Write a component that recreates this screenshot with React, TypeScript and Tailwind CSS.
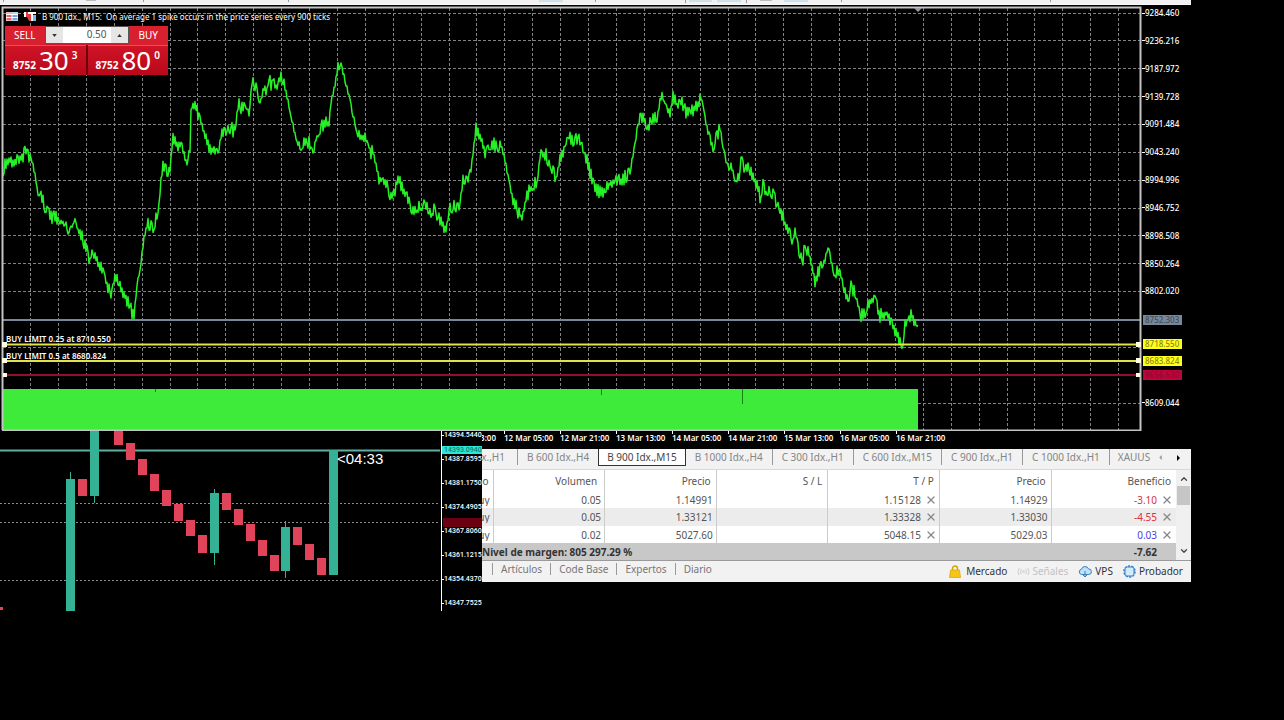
import React from 'react';
import { ChevronDown, ChevronUp, X } from 'lucide-react';

// Close prices of the M15 series, as [x, y] on the chart canvas
const PRICE_POINTS: [number, number][] = [
  [3, 178], [5, 165], [9, 161], [14, 162], [18, 160], [23, 158], [26, 148], [28, 155], [31, 156], [34, 170], [38, 190],
  [42, 196], [46, 210], [50, 216], [55, 218], [60, 220], [65, 226], [70, 230], [73, 230], [76, 220], [80, 233], [85, 245],
  [90, 260], [93, 248], [97, 262], [103, 270], [107, 285], [111, 296], [115, 276], [120, 284], [125, 297], [130, 307],
  [134, 317], [136, 295], [138, 280], [141, 262], [144, 238], [148, 222], [153, 228], [157, 217], [159, 205], [161, 180],
  [163, 167], [166, 171], [170, 170], [173, 136], [177, 145], [181, 145], [186, 162], [190, 150], [191, 112], [195, 105],
  [200, 118], [206, 140], [212, 150], [218, 155], [221, 136], [225, 131], [229, 127], [235, 132], [238, 105], [243, 108],
  [249, 114], [252, 82], [256, 85], [260, 105], [264, 86], [267, 90], [269, 77], [271, 84], [276, 86], [281, 75], [285, 88],
  [290, 110], [295, 135], [300, 148], [305, 141], [309, 142], [313, 155], [317, 133], [321, 127], [325, 122], [329, 124],
  [331, 102], [335, 85], [338, 66], [341, 65], [344, 76], [348, 92], [353, 115], [358, 135], [362, 141], [365, 136],
  [370, 153], [373, 152], [379, 178], [385, 183], [391, 195], [394, 193], [398, 179], [402, 187], [407, 198], [412, 212],
  [416, 207], [420, 205], [425, 207], [430, 211], [435, 210], [440, 218], [446, 230], [450, 207], [455, 205], [459, 208],
  [463, 182], [467, 181], [471, 170], [474, 145], [476, 129], [480, 137], [486, 154], [492, 143], [496, 147], [501, 145],
  [505, 160], [509, 182], [513, 200], [518, 212], [522, 218], [526, 200], [531, 184], [537, 184], [540, 157], [546, 155],
  [551, 168], [556, 179], [560, 160], [564, 148], [568, 136], [573, 140], [578, 139], [584, 151], [590, 172], [596, 188],
  [601, 194], [606, 187], [612, 183], [618, 182], [624, 178], [630, 172], [633, 155], [635, 145], [637, 130], [640, 119],
  [643, 116], [648, 127], [653, 116], [657, 120], [661, 94], [666, 101], [670, 115], [673, 96], [678, 104], [682, 103],
  [686, 113], [690, 109], [695, 109], [701, 97], [705, 118], [709, 137], [713, 146], [717, 136], [720, 128], [724, 152],
  [728, 169], [731, 165], [736, 183], [740, 173], [741, 155], [744, 167], [748, 166], [752, 175], [757, 187], [761, 199],
  [763, 185], [767, 197], [768, 189], [773, 196], [777, 203], [782, 215], [788, 232], [793, 241], [795, 230], [799, 250],
  [803, 263], [804, 250], [809, 254], [815, 280], [820, 268], [825, 260], [828, 246], [832, 265], [835, 278], [839, 268],
  [844, 288], [849, 303], [851, 285], [856, 297], [861, 316], [866, 311], [871, 299], [875, 301], [880, 316], [886, 313],
  [892, 325], [897, 335], [903, 343], [905, 325], [908, 323], [911, 314], [914, 322], [919, 321],
];

// Adds the tick jitter between the closes
function buildPricePath() {
  let path = '';
  let seed = 11;
  let side = 1;
  for (let i = 0; i < PRICE_POINTS.length - 1; i++) {
    const [x0, y0] = PRICE_POINTS[i];
    const [x1, y1] = PRICE_POINTS[i + 1];
    const slope = Math.abs((y1 - y0) / (x1 - x0));
    for (let x = x0; x < x1; x++) {
      seed = (seed * 16645 + 10139) % 1048576;
      const random = seed / 1048576;
      if (random < 0.75) side = -side;
      const size = slope > 3.5 ? 2 : 1 + ((random * 7) % 1) * 6;
      const y = y0 + ((y1 - y0) * (x - x0)) / (x1 - x0) + side * size;
      path += `${path ? 'L' : 'M'}${x} ${y.toFixed(1)}`;
    }
  }
  return path;
}

const PRICE_PATH = buildPricePath();

const GRID_X = Array.from({ length: 40 }, (_, i) => 30 + i * 27.9);
const GRID_Y = Array.from({ length: 15 }, (_, i) => 13 + i * 27.86);

const PRICE_LABELS = [
  '9284.460', '9236.216', '9187.972', '9139.728', '9091.484', '9043.240', '8994.996', '8946.752', '8898.508',
  '8850.264', '8802.020', '', '', '', '8609.044',
];

const PRICE_TAGS = [
  { text: '8752.303', className: 'top-[310px] bg-[#778899] text-[#414e5c]' },
  { text: '8718.550', className: 'top-[334px] bg-[#ffff1e] text-[#8a8a10]' },
  { text: '8683.824', className: 'top-[351px] bg-[#ffff1e] text-[#8a8a10]' },
  { text: '8656.630', className: 'top-[365px] bg-[#c0053c] text-[#8a0a30]' },
];

const TIME_LABELS = [
  '12 Mar 05:00', '12 Mar 21:00', '13 Mar 13:00', '14 Mar 05:00',
  '14 Mar 21:00', '15 Mar 13:00', '16 Mar 05:00', '16 Mar 21:00',
];

interface Candle {
  x: number;
  top: number;
  bottom: number;
  up?: boolean;
  high?: number;
  low?: number;
}

const CANDLES: Candle[] = [
  { x: 66, top: 479, bottom: 611, up: true, high: 472 },
  { x: 78, top: 479, bottom: 496 },
  { x: 90, top: 429, bottom: 496, up: true, low: 503 },
  { x: 114, top: 429, bottom: 445 },
  { x: 126, top: 443, bottom: 460 },
  { x: 138, top: 459, bottom: 475 },
  { x: 150, top: 474, bottom: 491 },
  { x: 162, top: 490, bottom: 506 },
  { x: 174, top: 504, bottom: 521 },
  { x: 186, top: 520, bottom: 536 },
  { x: 198, top: 535, bottom: 553 },
  { x: 210, top: 493, bottom: 553, up: true, high: 489, low: 565 },
  { x: 222, top: 493, bottom: 510 },
  { x: 234, top: 509, bottom: 525 },
  { x: 246, top: 524, bottom: 541 },
  { x: 258, top: 540, bottom: 556 },
  { x: 270, top: 555, bottom: 571 },
  { x: 281, top: 527, bottom: 571, up: true, high: 521, low: 578 },
  { x: 293, top: 527, bottom: 545 },
  { x: 305, top: 544, bottom: 560 },
  { x: 317, top: 558, bottom: 575 },
  { x: 329, top: 450, bottom: 575, up: true },
];

const CANDLE_LABELS = [
  '14394.5440', '14387.8595', '14381.1750', '14374.4905', '14367.8060', '14361.1215', '14354.4370', '14347.7525',
];

const CHART_TABS = [
  'B 600 Idx.,H4', 'B 900 Idx.,M15', 'B 1000 Idx.,H4', 'C 300 Idx.,H1', 'C 600 Idx.,M15', 'C 900 Idx.,H1', 'C 1000 Idx.,H1',
];

const POSITIONS = [
  { type: 'buy', volume: '0.05', open: '1.14991', tp: '1.15128', price: '1.14929', profit: '-3.10' },
  { type: 'buy', volume: '0.05', open: '1.33121', tp: '1.33328', price: '1.33030', profit: '-4.55' },
  { type: 'buy', volume: '0.02', open: '5027.60', tp: '5048.15', price: '5029.03', profit: '0.03' },
];

function ToolbarEdge() {
  return (
    <div className="h-[5px] border-b border-[#fafafa] bg-[#f1f1f1]">
      <svg viewBox="0 0 1191 4" preserveAspectRatio="none" className="block h-full w-full">
        <path d="M539 0h24v2h-24zM689 0h23v2h-23zM717 0h24v2h-24zM784 0h24v2h-24z" fill="#cfe0ea" />
        <path d="M86 0h10v1h-10zM760 0h12v1h-12z" fill="#bbb" />
        <path d="M3.500 0v2M143.500 0v2M288.500 0v2M595.500 0v2M685.500 0v3M746.500 0v3M841.500 0v2M1050.500 0v2" stroke="#999" />
      </svg>
    </div>
  );
}

function QuoteButton({ label, base, big, sup }: { label: string; base: string; big: string; sup: string }) {
  return (
    <button
      aria-label={`${label} ${base}${big}${sup}`}
      className="flex h-[30px] flex-1 items-end justify-center gap-[3px] border-t border-[#e05060] bg-linear-to-b from-[#cf1426] to-[#b8081a] text-white"
    >
      <span className="pb-1 text-[10px] leading-[11px] font-bold">{base}</span>
      <span className="pb-1 text-[26px] leading-[22px]">{big}</span>
      <span className="self-start pt-1 text-[10px] leading-none font-semibold">{sup}</span>
    </button>
  );
}

function OneClickTrading() {
  return (
    <div className="absolute top-[21px] left-[5px] w-[163px] bg-[#6d0410]">
      <div className="flex h-[19px] bg-[#d0182a]">
        <button className="flex-1 bg-[#d9202f] pb-[2px] text-[10px] leading-[16px] text-white">SELL</button>
        <div className="flex h-[18px] w-[84px] border border-[#555] bg-[#e6e6e6]">
          <button aria-label="Menos volumen" className="flex w-[17px] items-center justify-center">
            <svg viewBox="0 0 6 4" className="h-[3px] w-[5px]"><path d="M0 0h6L3 4z" fill="#333" /></svg>
          </button>
          <input aria-label="Volumen" defaultValue="0.50" className="w-0 flex-1 bg-white pr-1 pb-[2px] text-right text-[10px] leading-[14px] text-[#555] outline-none" />
          <button aria-label="Más volumen" className="flex w-[17px] items-center justify-center">
            <svg viewBox="0 0 6 4" className="h-[3px] w-[5px]"><path d="M0 4h6L3 0z" fill="#333" /></svg>
          </button>
        </div>
        <button className="flex-1 bg-[#d9202f] pb-[2px] text-[10px] leading-[16px] text-white">BUY</button>
      </div>
      <div className="flex gap-[2px]">
        <QuoteButton label="SELL" base="8752" big="30" sup="3" />
        <QuoteButton label="BUY" base="8752" big="80" sup="0" />
      </div>
    </div>
  );
}

function PriceChart() {
  return (
    <section className="flex h-[426px]">
      <div className="relative min-w-0 flex-1">
        <svg viewBox="0 5 1142 426" preserveAspectRatio="none" className="block h-full w-full">
          <g stroke="#828282" strokeWidth="1" strokeDasharray="3 2">
            {GRID_X.map(x => <line key={x} x1={Math.round(x) + 0.5} x2={Math.round(x) + 0.5} y1="8" y2="430" />)}
            {GRID_Y.map(y => <line key={y} x1="3" x2="1140" y1={Math.floor(y) + 0.5} y2={Math.floor(y) + 0.5} />)}
          </g>
          <path d="M3 320H1140" stroke="#778899" strokeWidth="2" />
          <path d={PRICE_PATH} fill="none" stroke="#26f026" strokeWidth="1.5" strokeLinejoin="round" />
          <path d="M3 344.500H1140M3 361H1140" stroke="#e2e24a" strokeWidth="2" />
          <path d="M3 375H1140" stroke="#8e1230" strokeWidth="2" />
          <rect x="3" y="389" width="915" height="41" fill="#3eea3a" />
          <path d="M155.500 389v3M601.500 389v6M742.500 389v15" stroke="#177f17" />
          <path d="M2.500 430V7.500H1140.500V430.500H2" fill="none" stroke="#c4c4c4" strokeWidth="2" />
          <path d="M914 8h8l-4 4z" fill="#9a9aa8" />
          <g fill="#fffce0">
            <rect x="2" y="342" width="5" height="5" />
            <rect x="2" y="358" width="5" height="5" />
            <rect x="3" y="373" width="4" height="4" />
            <rect x="1136" y="342" width="5" height="5" />
            <rect x="1136" y="358" width="5" height="5" />
            <rect x="1136" y="373" width="4" height="4" />
          </g>
        </svg>

        <div className="absolute top-[6px] left-[6px] flex items-center text-[8px] leading-[11px] whitespace-pre text-white">
          <svg viewBox="0 0 36 11" className="h-[11px] w-9">
            <rect x="0" y="1" width="6" height="9" fill="#f3b3b3" />
            <rect x="6" y="1" width="6" height="9" fill="#b9d4f5" />
            <path d="M0 3.500h12M0 6.500h12" stroke="#fff" />
            <path d="M1 5h4M1 8h4" stroke="#c22" />
            <path d="M7 5h4M7 8h4" stroke="#3670c0" />
            <path d="M18 1h5l3 4v5h-3l-2-4h-3z" fill="#e23b3b" />
            <path d="M18 1h2v5h-2zM22 1h8v2h-3v7h-2V3h-3z" fill="#fff" />
            <rect x="27" y="4" width="3" height="6" fill="#7db6ee" />
          </svg>
          <span>B 900 Idx., M15:  On average 1 spike occurs in the price series every 900 ticks</span>
        </div>

        <OneClickTrading />

        <span className="absolute top-[329px] left-[6px] text-[8px] leading-[10px] font-semibold text-white">BUY LIMIT 0.25 at 8710.550</span>
        <span className="absolute top-[346px] left-[6px] text-[8px] leading-[10px] font-semibold text-white">BUY LIMIT 0.5 at 8680.824</span>
      </div>

      {/* Price axis */}
      <div className="relative w-[49px] shrink-0 pt-[3px] text-[8px] font-medium text-white">
        <div className="flex h-[400px] flex-col justify-between">
          {PRICE_LABELS.map((label, i) => (
            <div key={i} className="flex h-[10px] items-center leading-[10px]">
              {label && <span className="h-px w-[3px] bg-white" />}
              {label}
            </div>
          ))}
        </div>
        {PRICE_TAGS.map(tag => (
          <span key={tag.text} className={`absolute left-[1px] h-[10px] w-[39px] pl-[2px] leading-[10px] ${tag.className}`}>
            {tag.text}
          </span>
        ))}
      </div>
    </section>
  );
}

function CandleChart() {
  return (
    <section className="flex h-[180px] w-[482px] shrink-0">
      <div className="relative min-w-0 flex-1">
        <svg viewBox="0 431 442 180" preserveAspectRatio="none" className="block h-full w-full">
          <path d="M0 503.500H440M0 522.500H440M0 580.500H440" stroke="#8c8c8c" strokeDasharray="2 2" />
          <path d="M0 450.500H440" stroke="#5fb0a4" strokeWidth="2" />
          {CANDLES.map(c => (
            <g key={c.x} fill={c.up ? '#35b196' : '#e0435a'}>
              {(c.high || c.low) && (
                <rect x={c.x + 4} y={c.high ?? c.top} width="1" height={(c.low ?? c.bottom) - (c.high ?? c.top)} />
              )}
              <rect x={c.x} y={c.top} width="9" height={c.bottom - c.top} />
            </g>
          ))}
          <rect x="0" y="607" width="3" height="3" fill="#e0435a" />
          <path d="M441.500 431V611" stroke="#fff" />
        </svg>
        <span className="absolute top-[19px] left-[337px] font-['Liberation_Sans',sans-serif] text-[15px] leading-[18px] text-white">&lt;04:33</span>
      </div>

      <div className="relative w-10 shrink-0 font-[Roboto,sans-serif] text-[7px] font-medium text-white">
        <div className="flex h-[176px] flex-col justify-between">
          {CANDLE_LABELS.map(label => (
            <div key={label} className="flex h-2 items-center leading-[8px]">
              <span className="h-px w-[2px] bg-white" />
              {label}
            </div>
          ))}
        </div>
        <span className="absolute top-[15px] left-0 h-2 w-full bg-[#2ee6d6] pl-[2px] leading-[8px] text-[#0b7f78]">14393.0940</span>
        <span className="absolute top-[87px] left-[1px] h-[9px] w-[39px] bg-[#6a0010]" />
      </div>
    </section>
  );
}

function TimeAxis() {
  return (
    <div className="flex h-[18px] overflow-hidden pt-[1px] text-[8px] leading-[12px] font-semibold whitespace-nowrap text-white">
      <div className="flex w-[22px] shrink-0 justify-end overflow-hidden pr-2">11 Mar 13:00</div>
      {TIME_LABELS.map(label => (
        <div key={label} className="relative w-[56px] shrink-0">
          <span className="absolute -top-[1px] left-0 h-[3px] w-px bg-white" />
          {label}
        </div>
      ))}
    </div>
  );
}

function ChartTabs() {
  return (
    <nav className="flex h-[21px] items-start overflow-hidden border-b border-[#d8d8d8] bg-[#f2f2f2] text-[10px] leading-[16px] whitespace-nowrap text-[#858585]">
      <button className="flex w-[36px] shrink-0 justify-end overflow-hidden border-r border-[#999] pr-3">B 300 Idx.,H1</button>
      {CHART_TABS.map((tab, i) => (
        <button
          key={tab}
          className={
            i === 1
              ? 'h-[17px] shrink-0 border border-t-0 border-[#333] bg-white px-2 text-[#444]'
              : i === 0
                ? 'shrink-0 px-[9px]'
                : 'shrink-0 border-r border-[#999] px-[9px]'
          }
        >
          {tab}
        </button>
      ))}
      <button className="shrink-0 pl-2">XAUUS</button>
      <div className="ml-auto flex h-[17px] items-center gap-[15px] pr-[11px]">
        <button aria-label="Anterior"><svg viewBox="0 0 3 6" className="h-[5px] w-[3px]"><path d="M3 0v6L0 3z" fill="#999" /></svg></button>
        <button aria-label="Siguiente"><svg viewBox="0 0 3 6" className="h-[6px] w-[3px]"><path d="M0 0v6l3-3z" fill="#000" /></svg></button>
      </div>
    </nav>
  );
}

function CloseMark({ label }: { label: string }) {
  return (
    <button aria-label={label} className="ml-1 inline-flex align-top">
      <X className="h-3 w-3 text-[#888]" strokeWidth={2.5} />
    </button>
  );
}

function PositionsTable() {
  return (
    <div className="flex bg-white">
      <div className="min-w-0 flex-1">
        <table className="w-full table-fixed border-collapse text-right text-[10px] leading-[12px] text-[#555]">
          <colgroup>
            <col className="w-[11px]" />
            <col />
            <col />
            <col />
            <col />
            <col />
            <col className="w-[125px]" />
          </colgroup>
          <thead>
            <tr className="h-[21px]">
              <th className="border-r border-[#ccc] p-0 font-normal"><div className="flex justify-end overflow-hidden pr-1">Tipo</div></th>
              <th className="border-r border-[#ccc] p-0 pr-[7px] font-normal">Volumen</th>
              <th className="border-r border-[#ccc] p-0 pr-[5px] font-normal">Precio</th>
              <th className="border-r border-[#ccc] p-0 pr-[5px] font-normal">S / L</th>
              <th className="border-r border-[#ccc] p-0 pr-[5px] font-normal">T / P</th>
              <th className="border-r border-[#ccc] p-0 pr-[5px] font-normal">Precio</th>
              <th className="p-0 pr-[5px] font-normal">Beneficio</th>
            </tr>
          </thead>
          <tbody>
            {POSITIONS.map(p => (
              <tr key={p.open} className="h-[17px] even:h-[18px] even:bg-[#ececec]">
                <td className="border-r border-[#ccc] p-0"><div className="flex justify-end overflow-hidden pr-[3px]">{p.type}</div></td>
                <td className="border-r border-[#ccc] p-0 pr-[3px]">{p.volume}</td>
                <td className="border-r border-[#ccc] p-0 pr-[3px]">{p.open}</td>
                <td className="border-r border-[#ccc] p-0" />
                <td className="border-r border-[#ccc] p-0 pr-[2px]">{p.tp}<CloseMark label={`Quitar T/P ${p.tp}`} /></td>
                <td className="border-r border-[#ccc] p-0 pr-[3px]">{p.price}</td>
                <td className={`p-0 pr-[3px] ${p.profit.startsWith('-') ? 'text-[#d8323c]' : 'text-[#4a3fe0]'}`}>
                  {p.profit}<CloseMark label={`Cerrar ${p.open}`} />
                </td>
              </tr>
            ))}
            <tr className="h-[17px] bg-[#c8c8c8] font-bold text-[#333]">
              <td colSpan={6} className="p-0 text-left">Nivel de margen: 805 297.29 %</td>
              <td className="p-0 pr-[19px]">-7.62</td>
            </tr>
          </tbody>
        </table>
      </div>
      <div className="flex w-[15px] shrink-0 flex-col items-center justify-between bg-[#f0f0f0] py-1 text-[#444]">
        <div className="flex flex-col items-center gap-[2px]">
          <ChevronUp className="h-[10px] w-[10px]" strokeWidth={3} />
          <span className="h-[19px] w-[13px] bg-[#c6c6c6]" />
        </div>
        <ChevronDown className="h-[10px] w-[10px]" strokeWidth={3} />
      </div>
    </div>
  );
}

function ToolboxBar() {
  return (
    <div className="flex h-[22px] items-center justify-between border-t border-[#9a9a9a] bg-[#f2f2f2] pr-2 pb-[1px] text-[10px] leading-[12px]">
      <nav className="flex pb-1 text-[#777]">
        <span className="w-[11px] border-r border-[#999]" />
        <button className="border-r border-[#999] px-2">Artículos</button>
        <button className="border-r border-[#999] px-2">Code Base</button>
        <button className="border-r border-[#999] px-2">Expertos</button>
        <button className="px-2">Diario</button>
      </nav>
      <div className="flex items-center gap-[10px] text-[#333]">
        <button className="flex items-center gap-[5px]">
          <svg viewBox="0 0 12 13" className="h-[13px] w-3">
            <path d="M3.500 6V3.500a2.500 2.500 0 0 1 5 0V6" fill="none" stroke="#d9a400" strokeWidth="1.500" />
            <path d="M1.500 5h9l1 7.500H.5z" fill="#f5c518" stroke="#d9a400" strokeWidth=".7" />
          </svg>
          Mercado
        </button>
        <button className="flex items-center gap-[2px] text-[#c2c2c2]" disabled>
          <svg viewBox="0 0 14 10" className="h-[9px] w-[13px]" fill="none" stroke="#c8c8c8">
            <circle cx="7" cy="5" r="1" />
            <path d="M4.500 2q-1.500 3 0 6M9.500 2q1.500 3 0 6M2 1q-2 4 0 8M12 1q2 4 0 8" />
          </svg>
          Señales
        </button>
        <button className="flex items-center gap-[3px]">
          <svg viewBox="0 0 14 13" className="h-[13px] w-[14px]">
            <path d="M3.500 9.500a2.700 2.700 0 0 1 0-5.300 3.700 3.700 0 0 1 7-.3 2.800 2.800 0 0 1 .3 5.600z" fill="#bfe0fa" stroke="#3b7fb8" />
            <path d="M7 6v6M4.500 9.500 7 12l2.500-2.500" fill="none" stroke="#3b7fb8" />
          </svg>
          VPS
        </button>
        <button className="flex items-center gap-[3px]">
          <svg viewBox="0 0 13 13" className="h-[13px] w-[13px]">
            <circle cx="6.500" cy="6.500" r="5.500" fill="none" stroke="#2f80c8" strokeWidth="1.600" strokeDasharray="2 1.400" />
            <rect x="2" y="2" width="9" height="9" rx="2" fill="#d4ebfc" stroke="#2f80c8" />
          </svg>
          Probador
        </button>
      </div>
    </div>
  );
}

export default function App() {
  return (
    <main className="min-h-screen bg-black pr-[93px] font-['Noto_Sans',sans-serif]">
      <ToolbarEdge />

      <PriceChart />

      <div className="flex items-start">
        <CandleChart />
        <section className="min-w-0 flex-1">
          <TimeAxis />
          <ChartTabs />
          <PositionsTable />
          <ToolboxBar />
        </section>
      </div>
    </main>
  );
}
